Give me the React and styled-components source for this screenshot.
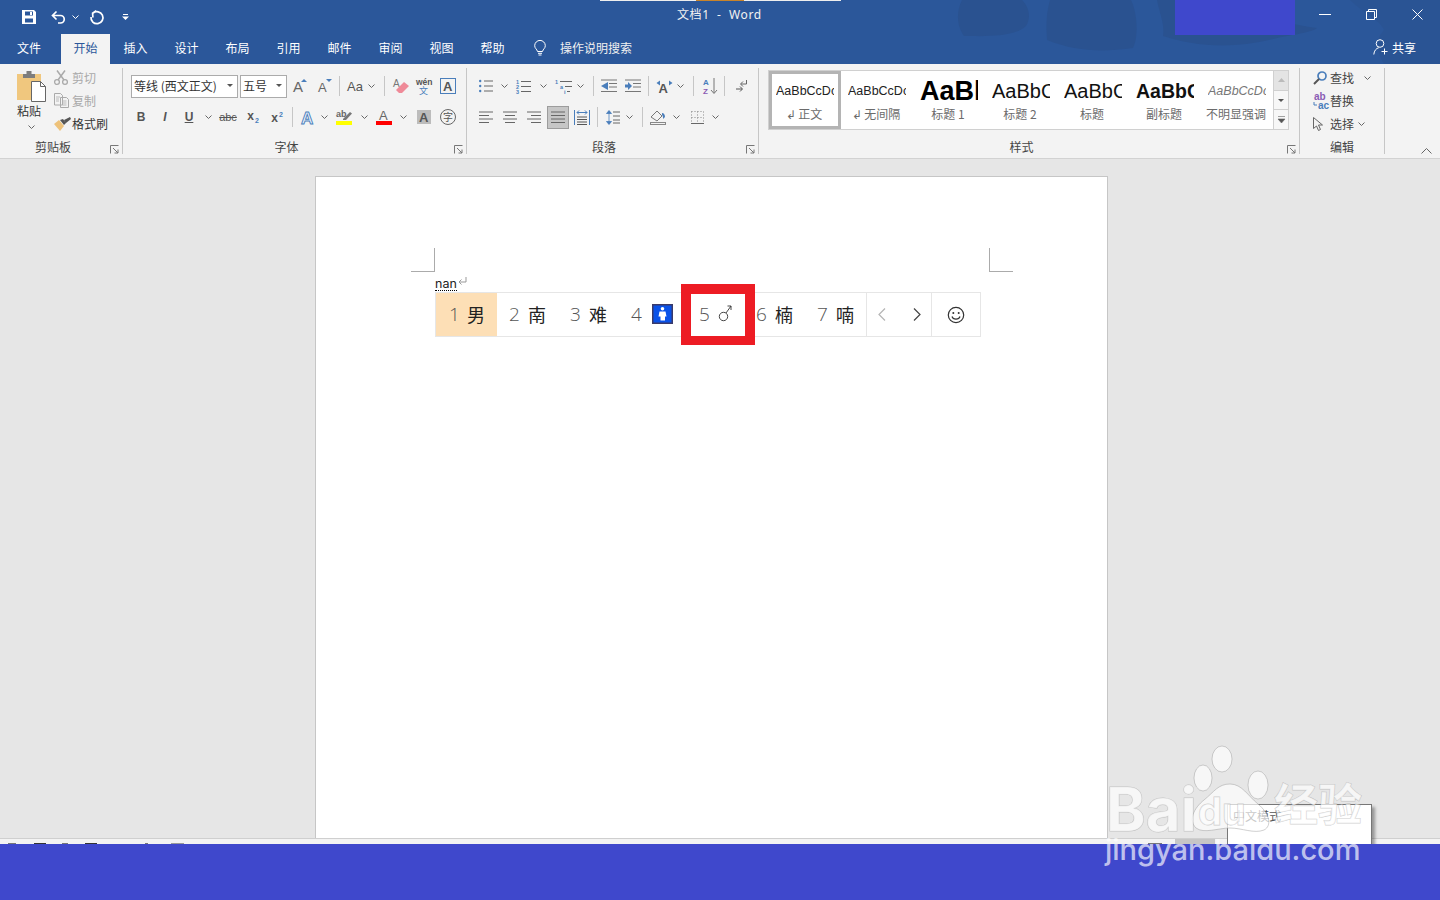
import React from 'react';
import styled, { createGlobalStyle } from 'styled-components';

const Global = createGlobalStyle`
  html, body { margin: 0; padding: 0; background: #e6e6e6; }
  #root { width: 1440px; height: 900px; }
  * { box-sizing: border-box; }
`;
const CJK = '"Noto Sans CJK SC", "Liberation Sans", sans-serif';
const LAT = '"Liberation Sans", "Noto Sans CJK SC", sans-serif';

const App_ = styled.div`
  position: relative; width: 1440px; height: 900px; overflow: hidden;
  display: flex; flex-direction: column; font-family: ${CJK}; font-size: 12px; color: #444;
`;
const Chrome = styled.header`position: relative; background: #2b579a; color: #fff; height: 64px; display: flex; flex-direction: column;`;
const Decor = styled.svg`position: absolute; left: 950px; top: 0; pointer-events: none;`;
const TopLine = styled.div`position: absolute; left: 600px; top: 0; width: 241px; height: 1px; background: linear-gradient(90deg, #eee 0 96px, #c8832a 96px 144px, #eee 144px);`;
const Patch = styled.div`position: absolute; left: 1175px; top: 0; width: 120px; height: 35px; background: #3f48cc;`;
const TitleBar = styled.div`position: relative; height: 34px; display: flex; align-items: center; flex: none;`;
const Qat = styled.div`display: flex; align-items: center; width: 677px; padding-left: 17px; flex: none;`;
const Title = styled.div`font-family: "Noto Sans", "Noto Sans CJK SC", sans-serif; font-size: 12px; color: #f2f2f2; white-space: pre; letter-spacing: .6px; margin-top: -6px;`;
const WinControls = styled.div`margin-left: auto; display: flex; align-items: center; margin-top: -5px;`;
const WinBtn = styled.div`width: 46px; height: 30px; display: flex; align-items: center; justify-content: center;`;
const TabBar = styled.nav`position: relative; height: 30px; display: flex; align-items: stretch; flex: none;`;
const Tab = styled.div`
  width: ${p => p.$w || 51}px; display: flex; align-items: center; justify-content: center; padding-bottom: 4px;
  padding-right: ${p => p.$pr || 0}px;
  color: ${p => p.$active ? '#2b579a' : '#fff'}; background: ${p => p.$active ? '#f3f3f3' : 'transparent'};
`;
const Tell = styled.div`display: flex; align-items: center; gap: 14px; margin-left: 16px; padding-bottom: 3px; color: #f0f0f0;`;
const Share = styled.div`margin-left: auto; margin-right: 24px; display: flex; align-items: center; gap: 3px; padding-bottom: 4px;`;

const Ribbon = styled.section`height: 95px; flex: none; background: #f3f3f3; border-bottom: 1px solid #d2d2d2; padding-top: 4px; display: flex; align-items: flex-start;`;
const Group = styled.div`position: relative; width: ${p => p.$w}px; height: 86px; flex: none; display: flex; flex-direction: column; border-right: 1px solid #c6c6c6;`;
const GroupBody = styled.div`height: 70px; flex: none; padding: ${p => p.$pad || '6px 0 0 6px'}; display: flex; flex-direction: ${p => p.$dir || 'column'}; gap: ${p => p.$gap ?? 7}px;`;
const GroupLabel = styled.div`height: 16px; line-height: 17px; text-align: center; font-size: 12px; color: #444; padding-right: ${p => p.$pr || 0}px;`;
const Launcher = styled.svg`position: absolute; right: 3px; bottom: 0;`;
const Row = styled.div`display: flex; align-items: center; height: 24px; padding-left: ${p => p.$pl || 0}px;`;
const Tool = styled.div`
  width: ${p => p.$w}px; height: 24px; flex: none; display: flex; align-items: center; justify-content: center; margin-left: ${p => p.$ml || 0}px;
`;
const ActiveTool = styled(Tool)`background: #c6c6c6; border: 1px solid #9c9c9c; height: 23px;`;
const Sep = styled.div`width: 1px; height: 20px; flex: none; background: #c6c6c6; margin: 0 ${p => p.$mr || 0}px 0 ${p => p.$ml || 0}px;`;
const Select = styled.div`
  width: ${p => p.$w}px; height: 23px; flex: none; margin-right: ${p => p.$mr || 0}px; background: #fff; border: 1px solid #ababab; display: flex; align-items: center; justify-content: space-between;
  padding: 0 4px 2px 2px; color: #333; white-space: nowrap; font-size: 12px;
`;
const Ic = styled.svg`display: block; flex: none; overflow: visible;`;

const PasteCol = styled.div`width: 54px; flex: none; padding-left: 8px; display: flex; flex-direction: column; align-items: center;`;
const PasteLabel = styled.div`color: #333; margin: 0 4px 6px 0; line-height: 17px;`;
const ClipList = styled.div`display: flex; flex-direction: column; margin-top: -5px;`;
const ClipItem = styled.div`height: 23px; display: flex; align-items: center; color: ${p => p.$off ? '#a9a9a9' : '#333'};`;
const ClipIcon = styled.div`width: 18px; flex: none; display: flex; justify-content: flex-start;`;

const Gallery = styled.div`margin: 2px 0 0 9px; width: 521px; height: 60px; background: #fff; border: 1px solid #d0d0d0; display: flex;`;
const StyleItem = styled.div`
  width: 72px; height: 58px; flex: none; display: flex; flex-direction: column; align-items: center; overflow: hidden;
  border: ${p => p.$sel ? '3px solid #b4b4b4' : '0'}; padding-top: ${p => p.$sel ? 0 : 3}px;
`;
const Preview = styled.div`
  width: 58px; height: 34px; line-height: 34px; flex: none; overflow: hidden; white-space: nowrap; color: ${p => p.$c || '#111'}; font-family: ${LAT};
  font-size: ${p => p.$s}px; font-weight: ${p => p.$b ? 700 : 400}; font-style: ${p => p.$i ? 'italic' : 'normal'};
`;
const StyleName = styled.div`height: 20px; line-height: 18px; margin: -3px 2px 0 0; color: #6b6b6b; white-space: nowrap; font-size: 12px;`;
const Scroller = styled.div`width: 15px; margin-left: auto; display: flex; flex-direction: column; border-left: 1px solid #d0d0d0;`;
const ScrollBtn = styled.div`flex: 1; display: flex; align-items: center; justify-content: center; background: ${p => p.$off ? '#e4e4e4' : '#f7f7f7'}; border-bottom: 1px solid #d0d0d0; &:last-child { border-bottom: 0; }`;
const EditList = styled.div`display: flex; flex-direction: column; margin-left: 13px; margin-top: -2px;`;
const EditItem = styled.div`height: 23px; display: flex; align-items: center; color: #444;`;
const EditIcon = styled.div`width: 17px; display: flex; justify-content: flex-start; flex: none;`;
const EditText = styled.span`margin-right: ${p => p.$mr}px;`;
const CollapseZone = styled.div`flex: 1; height: 86px; display: flex; justify-content: flex-end; align-items: flex-end; padding: 0 8px 0; `;

const Canvas = styled.main`height: 679px; flex: none; background: #e6e6e6; padding: 17px 0 0 315px; overflow: hidden;`;
const Page = styled.div`width: 793px; height: 700px; background: #fff; border: 1px solid #c6c6c6; border-bottom: 0;`;
const Crops = styled.div`margin: 71px 0 0 95px; width: 602px; display: flex; justify-content: space-between;`;
const Crop = styled.div`width: 24px; height: 24px; border-bottom: 1px solid #ababab; ${p => p.$right ? 'border-left' : 'border-right'}: 1px solid #ababab;`;
const DocLine = styled.div`margin: 5px 0 1px 119px; height: 14px; line-height: 14px; font-family: "Inter", "Liberation Sans", sans-serif; font-size: 12.5px; color: #222; display: flex; align-items: center;`;
const Pinyin = styled.span`border-bottom: 1px dotted #000; line-height: 12px;`;
const Ime = styled.div`position: relative; margin: 0 0 0 119px; width: 546px; height: 45px; display: flex; background: #fff; border: 1px solid #e6e6e6;`;
const Cand = styled.div`
  width: ${p => p.$w}px; flex: none; display: flex; align-items: center; gap: ${p => p.$gap || 8}px; padding: 0 0 2px ${p => p.$pl || 12}px; background: ${p => p.$on ? '#fddfb6' : 'transparent'};
`;
const CandNum = styled.span`font-family: "Open Sans", "Liberation Sans", sans-serif; font-weight: 300; font-size: 19px; color: #555; width: 11px;`;
const CandCh = styled.span`font-size: 18px; color: #222; line-height: 20px;`;
const ImeBtn = styled.div`width: ${p => p.$w}px; flex: none; display: flex; align-items: center; justify-content: center; padding-left: ${p => p.$pl || 0}px; border-left: ${p => p.$line ? '1px solid #e6e6e6' : '0'};`;
const RedBox = styled.div`position: absolute; left: 245px; top: -9px; width: 74px; height: 61px; border: 10px solid #ed1c24; border-bottom-width: 9px;`;

const StatusBar = styled.footer`height: 6px; flex: none; background: #f3f3f3; border-top: 1px solid #cfcfcf; display: flex; align-items: flex-end;`;
const Mark = styled.div`width: ${p => p.$w}px; height: ${p => p.$h || 1}px; flex: none; margin-left: ${p => p.$ml}px; background: ${p => p.$c || '#333'};`;
const Cover = styled.div`position: relative; z-index: 2; flex: 1; background: #3f48cc;`;
const Tooltip = styled.div`
  position: absolute; z-index: 1; left: 1227px; top: 804px; width: 145px; height: 60px; background: #fff; border: 1px solid #777;
  box-shadow: 3px 3px 3px rgba(0,0,0,.35); padding: 1px 0 0 5px; font-size: 12px; color: #555; line-height: 20px; white-space: nowrap;
`;
const TipSecond = styled.div`margin-top: 14px; font-size: 12px;`;
const Watermark = styled.div`position: absolute; z-index: 3; left: 1100px; top: 740px; width: 280px; height: 140px; pointer-events: none;`;
const WmPaw = styled.svg`position: absolute; left: 0; top: 0;`;
const WmBai = styled.div`
  position: absolute; left: ${p => p.$l}px; top: ${p => p.$t}px; font-family: ${p => p.$cjk ? CJK : '"Inter", "Liberation Sans", sans-serif'}; font-weight: ${p => p.$w || 700}; font-size: ${p => p.$s}px; line-height: 1;
  color: rgba(255,255,255,${p => p.$a || .55}); white-space: nowrap; letter-spacing: ${p => p.$ls || 0}px; -webkit-text-stroke: ${p => p.$stroke ? '1px rgba(150,150,150,.45)' : '0'}; paint-order: stroke fill;
`;

const blue = '#4a7ebb';
const Chev = ({ c = '#666' }) => <Ic width="7" height="4" viewBox="0 0 7 4"><path d="M.5.5l3 3 3-3" fill="none" stroke={c} /></Ic>;
const Tri = ({ c = '#555' }) => <Ic width="6" height="3" viewBox="0 0 6 3"><path d="M0 0h6L3 3z" fill={c} /></Ic>;
const Save = () => <Ic width="14" height="14" viewBox="0 0 14 14"><path d="M0 0h12l2 2v12H0zM3 1.5v4h8v-4zM3 8.5v4h8v-4zM8 2h2v3H8z" fill="#fff" fillRule="evenodd" /></Ic>;
const Undo = () => <Ic width="15" height="14" viewBox="0 0 15 14"><path d="M5.5 1.5L1.5 5.5l4 4M1.5 5.5h8a3.7 3.7 0 0 1 0 7.5H7" fill="none" stroke="#fff" strokeWidth="1.7" /></Ic>;
const Redo = () => <Ic width="14" height="14" viewBox="0 0 14 14"><path d="M3 3.2A6 6 0 1 1 1 7M6.2.8L2.600 3.200l.3 4.300" fill="none" stroke="#fff" strokeWidth="1.7" /></Ic>;
const Custom = () => <Ic width="7" height="6" viewBox="0 0 7 6"><path d="M1 0h5v1H1zM0 2.5h7L3.5 6z" fill="#fff" /></Ic>;
const Bulb = () => <Ic width="12" height="16" viewBox="0 0 12 16"><path d="M3.5 11.5C3 9 .7 8.500.7 5.700a5.300 5.300 0 0 1 10.600 0c0 2.800-2.300 3.300-2.800 5.800zM4 13.300h4M4.500 15h3" fill="none" stroke="#fff" /></Ic>;
const PersonPlus = () => <Ic width="16" height="16" viewBox="0 0 16 16"><circle cx="7" cy="4.500" r="3.800" fill="none" stroke="#fff" /><path d="M.8 15.500c.3-3.800 2.500-6.300 5-6.800M11.500 9.500v6M8.500 12.500h6" fill="none" stroke="#fff" /></Ic>;
const LaunchIc = () => <Launcher width="9" height="9" viewBox="0 0 9 9"><path d="M.5 8.500V.5h8M3 3l5 5M8 4.500V8H4.500M8.500 8.500" fill="none" stroke="#777" /></Launcher>;

const Paste = () => <Ic width="29" height="31" viewBox="0 0 29 31"><path d="M0 3h24v26H0z" fill="#f0c77e" /><path d="M6 3h12v4H6zM9.500 0h5v3h-5z" fill="#7d7d7d" /><path d="M14.500 10.500h9l5 5v15h-14z" fill="#fff" stroke="#666" /><path d="M23.500 10.500v5h5" fill="none" stroke="#666" /></Ic>;
const Scissors = () => <Ic width="14" height="15" viewBox="0 0 14 15"><circle cx="3" cy="12" r="2.400" fill="none" stroke="#aaa" strokeWidth="1.300" /><circle cx="11" cy="12" r="2.400" fill="none" stroke="#aaa" strokeWidth="1.300" /><path d="M4 10L11 .5M10 10L3 .5" stroke="#aaa" strokeWidth="1.500" fill="none" /></Ic>;
const CopyIc = () => <Ic width="15" height="15" viewBox="0 0 15 15"><path d="M.5.5h6l2 2V12H.5zM6.500 4.500h6l2 2v8h-8z" fill="#f3f3f3" stroke="#aaa" /><path d="M2 4h4M2 6h3M2 8h3M8.500 8h4M8.500 10h4M8.500 12h4" stroke="#bbb" /></Ic>;
const Brush = () => <Ic width="17" height="14" viewBox="0 0 17 14"><path d="M0 7l5-4 5 6-4 5z" fill="#eec27a" /><path d="M6 3l4 5 2-2-3-4zM10 3l6-3 1 2-5 4z" fill="#555" /></Ic>;

const SvgT = styled.text`font-family: ${LAT};`;
const GrowA = ({ up }) => <Ic width="14" height="14" viewBox="0 0 14 14"><SvgT x="0" y="13" fontSize={up ? 15 : 13} fill="#666">A</SvgT><path d={up ? 'M8 3l3-3 3 3z' : 'M8 0h6l-3 3z'} fill={blue} /></Ic>;
const Eraser = () => <Ic width="16" height="16" viewBox="0 0 16 16"><SvgT x="0" y="9" fontSize="10" fill="#777">A</SvgT><path d="M3 12L11 4l5 4-7 7H6z" fill="#ef8a98" /></Ic>;
const Wen = () => <Ic width="16" height="17" viewBox="0 0 16 17"><SvgT x="0" y="7" fontSize="8.500" fontWeight="700" fill="#555">wén</SvgT><SvgT x="3" y="16" fontSize="9" fill="#4a7ebb" fontFamily={CJK}>文</SvgT></Ic>;
const BoxA = () => <Ic width="16" height="16" viewBox="0 0 16 16"><rect x=".5" y=".5" width="15" height="15" fill="none" stroke="#4a7ebb" /><SvgT x="3" y="13" fontSize="13" fontWeight="700" fill="#555">A</SvgT></Ic>;
const Glyph = styled.span`font-family: ${LAT}; font-weight: ${p => p.$b ? 700 : 400}; font-style: ${p => p.$i ? 'italic' : 'normal'}; font-size: ${p => p.$s || 12}px; color: ${p => p.$c || '#555'}; line-height: 1; position: relative;
  text-decoration: ${p => p.$d || 'none'};
`;
const Sub = styled.span`font-size: 7px; color: ${blue}; vertical-align: ${p => p.$sup ? '5px' : '-3px'}; font-weight: 700; margin-left: 1px;`;
const FxA = () => <Ic width="16" height="17" viewBox="0 0 16 17"><SvgT x="1" y="15" fontSize="17" fontWeight="700" fill="#eef4fb" stroke="#4a7ebb" strokeWidth=".9">A</SvgT></Ic>;
const HiLite = () => <Ic width="16" height="15" viewBox="0 0 16 15"><SvgT x="0" y="7" fontSize="9" fontWeight="700" fill="#666">ab</SvgT><path d="M7 9l7-7 2 1.500-6 6.500H7z" fill="#777" /><rect y="11" width="16" height="4" fill="#ff0" /></Ic>;
const RedA = () => <Ic width="16" height="16" viewBox="0 0 16 16"><SvgT x="3" y="11" fontSize="13" fill="#666">A</SvgT><rect y="12" width="16" height="4" fill="#f00" /></Ic>;
const ShadeA = () => <Ic width="14" height="14" viewBox="0 0 14 14"><rect width="14" height="14" fill="#bcbcbc" /><SvgT x="2" y="12" fontSize="13" fontWeight="700" fill="#555">A</SvgT></Ic>;
const Circled = () => <Ic width="16" height="16" viewBox="0 0 16 16"><circle cx="8" cy="8" r="7.500" fill="none" stroke="#666" /><SvgT x="3" y="12" fontSize="10" fill="#555" fontFamily={CJK}>字</SvgT></Ic>;

const Bullets = () => <Ic width="14" height="14" viewBox="0 0 14 14"><path d="M0 2a1.200 1.200 0 1 0 2.400 0A1.200 1.200 0 1 0 0 2zM0 7a1.200 1.200 0 1 0 2.400 0A1.200 1.200 0 1 0 0 7zM0 12a1.200 1.200 0 1 0 2.400 0A1.200 1.200 0 1 0 0 12z" fill={blue} /><path d="M5 2h9M5 7h9M5 12h9" stroke="#666" /></Ic>;
const Numbered = () => <Ic width="15" height="15" viewBox="0 0 15 15"><SvgT x="0" y="5" fontSize="5.500" fill={blue} fontWeight="700">1</SvgT><SvgT x="0" y="10" fontSize="5.500" fill={blue} fontWeight="700">2</SvgT><SvgT x="0" y="15" fontSize="5.500" fill={blue} fontWeight="700">3</SvgT><path d="M5 2.500h10M5 7.500h10M5 12.500h10" stroke="#666" /></Ic>;
const Multi = () => <Ic width="17" height="15" viewBox="0 0 17 15"><SvgT x="0" y="5" fontSize="5.500" fill={blue} fontWeight="700">1</SvgT><SvgT x="5" y="10" fontSize="5.500" fill={blue} fontWeight="700">a</SvgT><SvgT x="9" y="15" fontSize="5.500" fill={blue} fontWeight="700">i</SvgT><path d="M5 2.500h12M10 7.500h7M12 12.500h3" stroke="#666" /></Ic>;
const Indent = ({ rev }) => <Ic width="16" height="14" viewBox="0 0 16 14"><path d="M0 1h16M8 4.500h8M8 8h8M0 12.500h16" stroke="#777" fill="none" /><path d={rev ? 'M7 3v8L0 7z' : 'M0 5.500h3V3l4 4-4 4V8.500H0z'} fill={blue} /></Ic>;
const Asian = () => <Ic width="17" height="13" viewBox="0 0 17 13"><SvgT x="2.500" y="13" fontSize="13" fontWeight="700" fill="#555">A</SvgT><path d="M4 .5L.5 3l3.500 2.500zM13 .5L16.500 3 13 5.500z" fill={blue} /></Ic>;
const Sort = () => <Ic width="15" height="16" viewBox="0 0 15 16"><SvgT x="0" y="7" fontSize="8" fontWeight="700" fill={blue}>A</SvgT><SvgT x="0" y="15.500" fontSize="8" fontWeight="700" fill="#8a5bb4">Z</SvgT><path d="M11 0v15M8 12l3 3.500 3-3.500" fill="none" stroke="#777" /></Ic>;
const Pil = () => <Ic width="11" height="12" viewBox="0 0 11 12"><path d="M10.500 0v4H5M7 1.500L4.500 4 7 6.500" fill="none" stroke="#666" /><path d="M0 9h6M4 6.500L6.500 9 4 11.500" fill="none" stroke="#555" /></Ic>;
const Align = ({ t }) => {
  const d = { l: 'M0 1h14M0 4.500h10M0 8h14M0 11.500h10', c: 'M0 1h14M2 4.500h10M0 8h14M2 11.500h10', r: 'M0 1h14M4 4.500h10M0 8h14M4 11.500h10', j: 'M0 1h14M0 4.500h14M0 8h14M0 11.500h14' }[t];
  return <Ic width="14" height="12" viewBox="0 0 14 12"><path d={d} stroke="#666" /></Ic>;
};
const Dist = () => <Ic width="16" height="15" viewBox="0 0 16 15"><path d="M.5 0v15M15.500 0v15" stroke={blue} /><path d="M3 2.500h10M3 2.500l2-2M3 2.500l2 2M13 2.500l-2-2M13 2.500l-2 2" stroke={blue} fill="none" /><path d="M3 7h10M3 9.500h10M3 12h10M3 14.500h10" stroke="#555" /></Ic>;
const Spacing = () => <Ic width="14" height="15" viewBox="0 0 14 15"><path d="M3 1v13M.5 3.500L3 .5l2.500 3zM.5 11.500L3 14.500l2.500-3z" stroke={blue} fill={blue} strokeWidth=".8" /><path d="M7 2h7M7 6h7M7 10h7M7 13h7" stroke="#666" /></Ic>;
const Bucket = () => <Ic width="16" height="16" viewBox="0 0 16 16"><path d="M1 8l6-6 5 5-5 5z" fill="#f3f3f3" stroke="#777" /><path d="M12 4c2 0 3 2 3 4l-2 2c0-2 0-3-1-4z" fill={blue} /><rect x=".5" y="13.500" width="15" height="2" fill="#f3f3f3" stroke="#888" /></Ic>;
const Borders = () => <Ic width="13" height="13" viewBox="0 0 13 13"><path d="M.5.500h12M.5.500v12M12.500.500v12M6.500.500v12M.5 6.500h12" stroke="#888" strokeDasharray="1 2" fill="none" /><path d="M0 12.500h13" stroke="#666" /></Ic>;
const Search = () => <Ic width="14" height="14" viewBox="0 0 14 14"><circle cx="9" cy="5" r="4" fill="none" stroke={blue} strokeWidth="1.700" /><path d="M6 8l-5 5" stroke="#555" strokeWidth="1.900" /></Ic>;
const Replace = () => <Ic width="16" height="16" viewBox="0 0 16 16"><SvgT x="1" y="7" fontSize="10" fontWeight="700" fill="#8a5bb4">ab</SvgT><SvgT x="5" y="15.500" fontSize="10" fontWeight="700" fill={blue}>ac</SvgT><path d="M1 9v3h3" fill="none" stroke={blue} /></Ic>;
const Cursor = () => <Ic width="11" height="14" viewBox="0 0 11 14"><path d="M.5.500v11l3-2.500 2 4.500 2-1-2-4.500h4z" fill="#f3f3f3" stroke="#666" /></Ic>;

const Male = () => <Ic width="14" height="17" viewBox="0 0 14 17"><circle cx="5.500" cy="11.500" r="4.200" fill="none" stroke="#333" strokeWidth=".9" /><path d="M8 8l5-7M9.500 1H13v4" fill="none" stroke="#333" strokeWidth=".9" /></Ic>;
const Restroom = () => <Ic width="21" height="20" viewBox="0 0 21 20"><rect width="21" height="20" fill="#3a3a6a" /><rect x="1.500" y="1.500" width="18" height="17" fill="#0a52e8" /><circle cx="10.500" cy="4.800" r="1.800" fill="#fff" /><path d="M7.500 7.500h6l1 5h-1.500v4h-4.500v-4H6.500z" fill="#fff" /></Ic>;
const NavArrow = ({ left, c }) => <Ic width="8" height="13" viewBox="0 0 8 13"><path d={left ? 'M7 .5L1 6.500l6 6' : 'M1 .5l6 6-6 6'} fill="none" stroke={c} strokeWidth="1.200" /></Ic>;
const Smile = () => <Ic width="18" height="18" viewBox="0 0 18 18"><circle cx="9" cy="9" r="7.700" fill="none" stroke="#333" strokeWidth="1.200" /><circle cx="6.300" cy="7" r="1" fill="#333" /><circle cx="11.700" cy="7" r="1" fill="#333" /><path d="M5 10.500c1 3.500 7 3.500 8 0" fill="none" stroke="#333" strokeWidth="1.200" /></Ic>;
const Ret = styled.svg`display: block; margin-left: 1px; margin-top: -6px;`;

const StyleEntries = [
  { p: 'AaBbCcDc', s: 12.500, c: '#222', n: '↲ 正文', sel: true },
  { p: 'AaBbCcDc', s: 12.500, c: '#222', n: '↲ 无间隔' },
  { p: 'AaBl', s: 27, b: true, c: '#000', n: '标题 1' },
  { p: 'AaBbC', s: 20, c: '#111', n: '标题 2' },
  { p: 'AaBbC', s: 20, c: '#111', n: '标题' },
  { p: 'AaBbC', s: 19.500, b: true, c: '#111', n: '副标题', },
  { p: 'AaBbCcDc', s: 12.500, i: true, c: '#777', n: '不明显强调' },
];

export default function App() {
  return (
    <App_>
      <Global />
      <Chrome>
        <Decor width="490" height="64" viewBox="0 0 490 64">
          <g fill="#2a5290">
            <path d="M12 0C5 14 8 28 14 36c18 0 50 2 62-10 6-10 2-20-4-26z" />
            <path d="M100 0c-4 14-4 26-3 40 30 12 56 12 86 8 6-12 4-36-2-48z" />
            <path d="M207 0c2 12 8 24 6 36 30 10 70 14 114 2 20-4 36-6 40-10-30-4-46-10-62-28z" />
            <path d="M400 0c14 14 30 20 34 30-10 10-6 24 0 34h56V0z" opacity=".55" />
          </g>
        </Decor>
        <TopLine />
        <Patch />
        <TitleBar>
          <Qat>
            <Tool $w={24}><Save /></Tool>
            <Tool $w={24} $ml={5}><Undo /></Tool>
            <Tool $w={8} $ml={1}><Chev c="#fff" /></Tool>
            <Tool $w={24} $ml={6}><Redo /></Tool>
            <Tool $w={8} $ml={12}><Custom /></Tool>
          </Qat>
          <Title>文档1  -  Word</Title>
          <WinControls>
            <WinBtn><Ic width="12" height="1" viewBox="0 0 12 1"><path d="M0 .5h12" stroke="#fff" /></Ic></WinBtn>
            <WinBtn><Ic width="11" height="11" viewBox="0 0 11 11"><path d="M.5 2.500h8v8h-8zM2.500 2.500v-2h8v8h-2" fill="none" stroke="#fff" /></Ic></WinBtn>
            <WinBtn><Ic width="11" height="11" viewBox="0 0 11 11"><path d="M.5.500l10 10M10.500.500l-10 10" stroke="#fff" /></Ic></WinBtn>
          </WinControls>
        </TitleBar>
        <TabBar>
          <Tab $w={61} $pr={3}>文件</Tab>
          <Tab $w={49} $active>开始</Tab>
          {['插入', '设计', '布局', '引用', '邮件', '审阅', '视图', '帮助'].map(t => <Tab key={t}>{t}</Tab>)}
          <Tell><Bulb />操作说明搜索</Tell>
          <Share><PersonPlus />共享</Share>
        </TabBar>
      </Chrome>

      <Ribbon>
        <Group $w={123}>
          <GroupBody $dir="row" $gap={0} $pad="3px 0 0 0">
            <PasteCol>
              <Paste />
              <PasteLabel>粘贴</PasteLabel>
              <Chev />
            </PasteCol>
            <ClipList>
              <ClipItem $off><ClipIcon><Scissors /></ClipIcon>剪切</ClipItem>
              <ClipItem $off><ClipIcon><CopyIc /></ClipIcon>复制</ClipItem>
              <ClipItem><ClipIcon><Brush /></ClipIcon>格式刷</ClipItem>
            </ClipList>
          </GroupBody>
          <GroupLabel $pr={16}>剪贴板</GroupLabel>
          <LaunchIc />
        </Group>

        <Group $w={344}>
          <GroupBody>
            <Row $pl={2}>
              <Select $w={107} $mr={2}>等线 (西文正文)<Tri /></Select>
              <Select $w={47}>五号<Tri /></Select>
              <Tool $w={26}><GrowA up /></Tool>
              <Tool $w={24}><GrowA /></Tool>
              <Sep $ml={2} $mr={3} />
              <Tool $w={24}><Glyph $s={13}>Aa</Glyph></Tool>
              <Tool $w={8}><Chev /></Tool>
              <Sep $ml={9} $mr={4} />
              <Tool $w={23}><Eraser /></Tool>
              <Tool $w={24}><Wen /></Tool>
              <Tool $w={24}><BoxA /></Tool>
            </Row>
            <Row>
              <Tool $w={24}><Glyph $b>B</Glyph></Tool>
              <Tool $w={24}><Glyph $i $s={12} $b>I</Glyph></Tool>
              <Tool $w={24}><Glyph $b $d="underline">U</Glyph></Tool>
              <Tool $w={14}><Chev /></Tool>
              <Tool $w={26}><Glyph $s={11} $d="line-through">abc</Glyph></Tool>
              <Tool $w={24}><Glyph $b>x<Sub>2</Sub></Glyph></Tool>
              <Tool $w={24}><Glyph $b>x<Sub $sup>2</Sub></Glyph></Tool>
              <Sep $ml={3} $mr={3} />
              <Tool $w={24}><FxA /></Tool>
              <Tool $w={8}><Chev /></Tool>
              <Tool $w={32}><HiLite /></Tool>
              <Tool $w={8}><Chev /></Tool>
              <Tool $w={32}><RedA /></Tool>
              <Tool $w={6}><Chev /></Tool>
              <Tool $w={36}><ShadeA /></Tool>
              <Tool $w={12}><Circled /></Tool>
            </Row>
          </GroupBody>
          <GroupLabel $pr={16}>字体</GroupLabel>
          <LaunchIc />
        </Group>

        <Group $w={292}>
          <GroupBody>
            <Row>
              <Tool $w={25}><Bullets /></Tool>
              <Tool $w={12}><Chev /></Tool>
              <Tool $w={27}><Numbered /></Tool>
              <Tool $w={12}><Chev /></Tool>
              <Tool $w={28}><Multi /></Tool>
              <Tool $w={6}><Chev /></Tool>
              <Sep $ml={10} $mr={4} />
              <Tool $w={22}><Indent rev /></Tool>
              <Tool $w={26}><Indent /></Tool>
              <Sep $ml={2} $mr={3} />
              <Tool $w={24}><Asian /></Tool>
              <Tool $w={8}><Chev /></Tool>
              <Sep $ml={9} $mr={4} />
              <Tool $w={24}><Sort /></Tool>
              <Sep $ml={2} $mr={4} />
              <Tool $w={24}><Pil /></Tool>
            </Row>
            <Row>
              <Tool $w={26}><Align t="l" /></Tool>
              <Tool $w={22}><Align t="c" /></Tool>
              <Tool $w={26}><Align t="r" /></Tool>
              <ActiveTool $w={22}><Align t="j" /></ActiveTool>
              <Tool $w={26}><Dist /></Tool>
              <Sep $ml={2} $mr={2} />
              <Tool $w={26}><Spacing /></Tool>
              <Tool $w={6}><Chev /></Tool>
              <Sep $ml={10} $mr={3} />
              <Tool $w={24}><Bucket /></Tool>
              <Tool $w={12}><Chev /></Tool>
              <Tool $w={30}><Borders /></Tool>
              <Tool $w={6}><Chev /></Tool>
            </Row>
          </GroupBody>
          <GroupLabel $pr={17}>段落</GroupLabel>
          <LaunchIc />
        </Group>

        <Group $w={541}>
          <GroupBody $pad="0" $gap={0}>
            <Gallery>
              {StyleEntries.map(e => (
                <StyleItem key={e.n} $sel={e.sel}>
                  <Preview $s={e.s} $b={e.b} $i={e.i} $c={e.c}>{e.p}</Preview>
                  <StyleName>{e.n}</StyleName>
                </StyleItem>
              ))}
              <Scroller>
                <ScrollBtn $off><Ic width="7" height="4" viewBox="0 0 7 4"><path d="M0 4h7L3.500 0z" fill="#bbb" /></Ic></ScrollBtn>
                <ScrollBtn><Tri /></ScrollBtn>
                <ScrollBtn><Ic width="7" height="7" viewBox="0 0 7 7"><path d="M0 .5h7M0 3h7L3.500 7z" stroke="#666" strokeWidth=".6" fill="#555" /></Ic></ScrollBtn>
              </Scroller>
            </Gallery>
          </GroupBody>
          <GroupLabel $pr={15}>样式</GroupLabel>
          <LaunchIc />
        </Group>

        <Group $w={85}>
          <GroupBody $pad="0" $gap={0}>
            <EditList>
              <EditItem><EditIcon><Search /></EditIcon><EditText $mr={10}>查找</EditText><Chev /></EditItem>
              <EditItem><EditIcon><Replace /></EditIcon>替换</EditItem>
              <EditItem><EditIcon><Cursor /></EditIcon><EditText $mr={4}>选择</EditText><Chev /></EditItem>
            </EditList>
          </GroupBody>
          <GroupLabel>编辑</GroupLabel>
        </Group>
        <CollapseZone><Ic width="11" height="6" viewBox="0 0 11 6"><path d="M.5 5.500l5-5 5 5" fill="none" stroke="#666" /></Ic></CollapseZone>
      </Ribbon>

      <Canvas>
        <Page>
          <Crops><Crop /><Crop $right /></Crops>
          <DocLine>
            <Pinyin>nan</Pinyin>
            <Ret width="9" height="8" viewBox="0 0 9 8"><path d="M8 0v5H1M3.500 2.500L1 5l2.500 2.500" fill="none" stroke="#999" /></Ret>
          </DocLine>
          <Ime>
            <Cand $w={61} $on $pl={13} $gap={7}><CandNum>1</CandNum><CandCh>男</CandCh></Cand>
            <Cand $w={61}><CandNum>2</CandNum><CandCh>南</CandCh></Cand>
            <Cand $w={61}><CandNum>3</CandNum><CandCh>难</CandCh></Cand>
            <Cand $w={68} $gap={10}><CandNum>4</CandNum><Restroom /></Cand>
            <Cand $w={57}><CandNum>5</CandNum><Male /></Cand>
            <Cand $w={61}><CandNum>6</CandNum><CandCh>楠</CandCh></Cand>
            <Cand $w={61}><CandNum>7</CandNum><CandCh>喃</CandCh></Cand>
            <ImeBtn $w={30} $line><NavArrow left c="#b5b5b5" /></ImeBtn>
            <ImeBtn $w={35} $pl={7}><NavArrow c="#444" /></ImeBtn>
            <ImeBtn $w={49} $line><Smile /></ImeBtn>
            <RedBox />
          </Ime>
        </Page>
      </Canvas>

      <StatusBar>
        <Mark $ml={8} $w={8} $c="#777" />
        <Mark $ml={18} $w={12} />
        <Mark $ml={16} $w={6} $c="#777" />
        <Mark $ml={17} $w={12} />
        <Mark $ml={48} $w={3} $c="#777" />
        <Mark $ml={23} $w={13} $c="#999" />
        <Mark $ml={964} $w={14} $c="#777" />
        <Mark $ml={13} $w={40} $h={5} $c="#c6c6c6" />
      </StatusBar>
      <Cover />

      <Tooltip>
        中文模式
        <TipSecond>单击以切换到英语模式</TipSecond>
      </Tooltip>

      <Watermark>
        <WmPaw width="280" height="140" viewBox="0 0 280 140">
          <g fill="rgba(255,255,255,.68)" stroke="rgba(150,150,150,.45)">
            <ellipse cx="122" cy="19" rx="10" ry="13" />
            <ellipse cx="103" cy="38" rx="9" ry="13" />
            <ellipse cx="158" cy="45" rx="10" ry="14" />
            <path d="M130 44c12 0 18 12 28 20 12 10 14 22 6 26-10 4-22-2-34-2s-26 6-34 0c-8-8-2-20 8-28 10-8 14-16 26-16z" />
          </g>
        </WmPaw>
        <WmBai $l={6} $t={39} $s={60} $a={.68} $stroke>Bai</WmBai>
        <WmBai $l={98} $t={52} $s={38} $a={.5} $stroke>du</WmBai>
        <WmBai $l={174} $t={40} $s={44} $a={.68} $cjk $stroke>经验</WmBai>
        <WmBai $l={5} $t={95} $s={29} $w={500} $a={.68}>jingyan.baidu.com</WmBai>
      </Watermark>
    </App_>
  );
}
